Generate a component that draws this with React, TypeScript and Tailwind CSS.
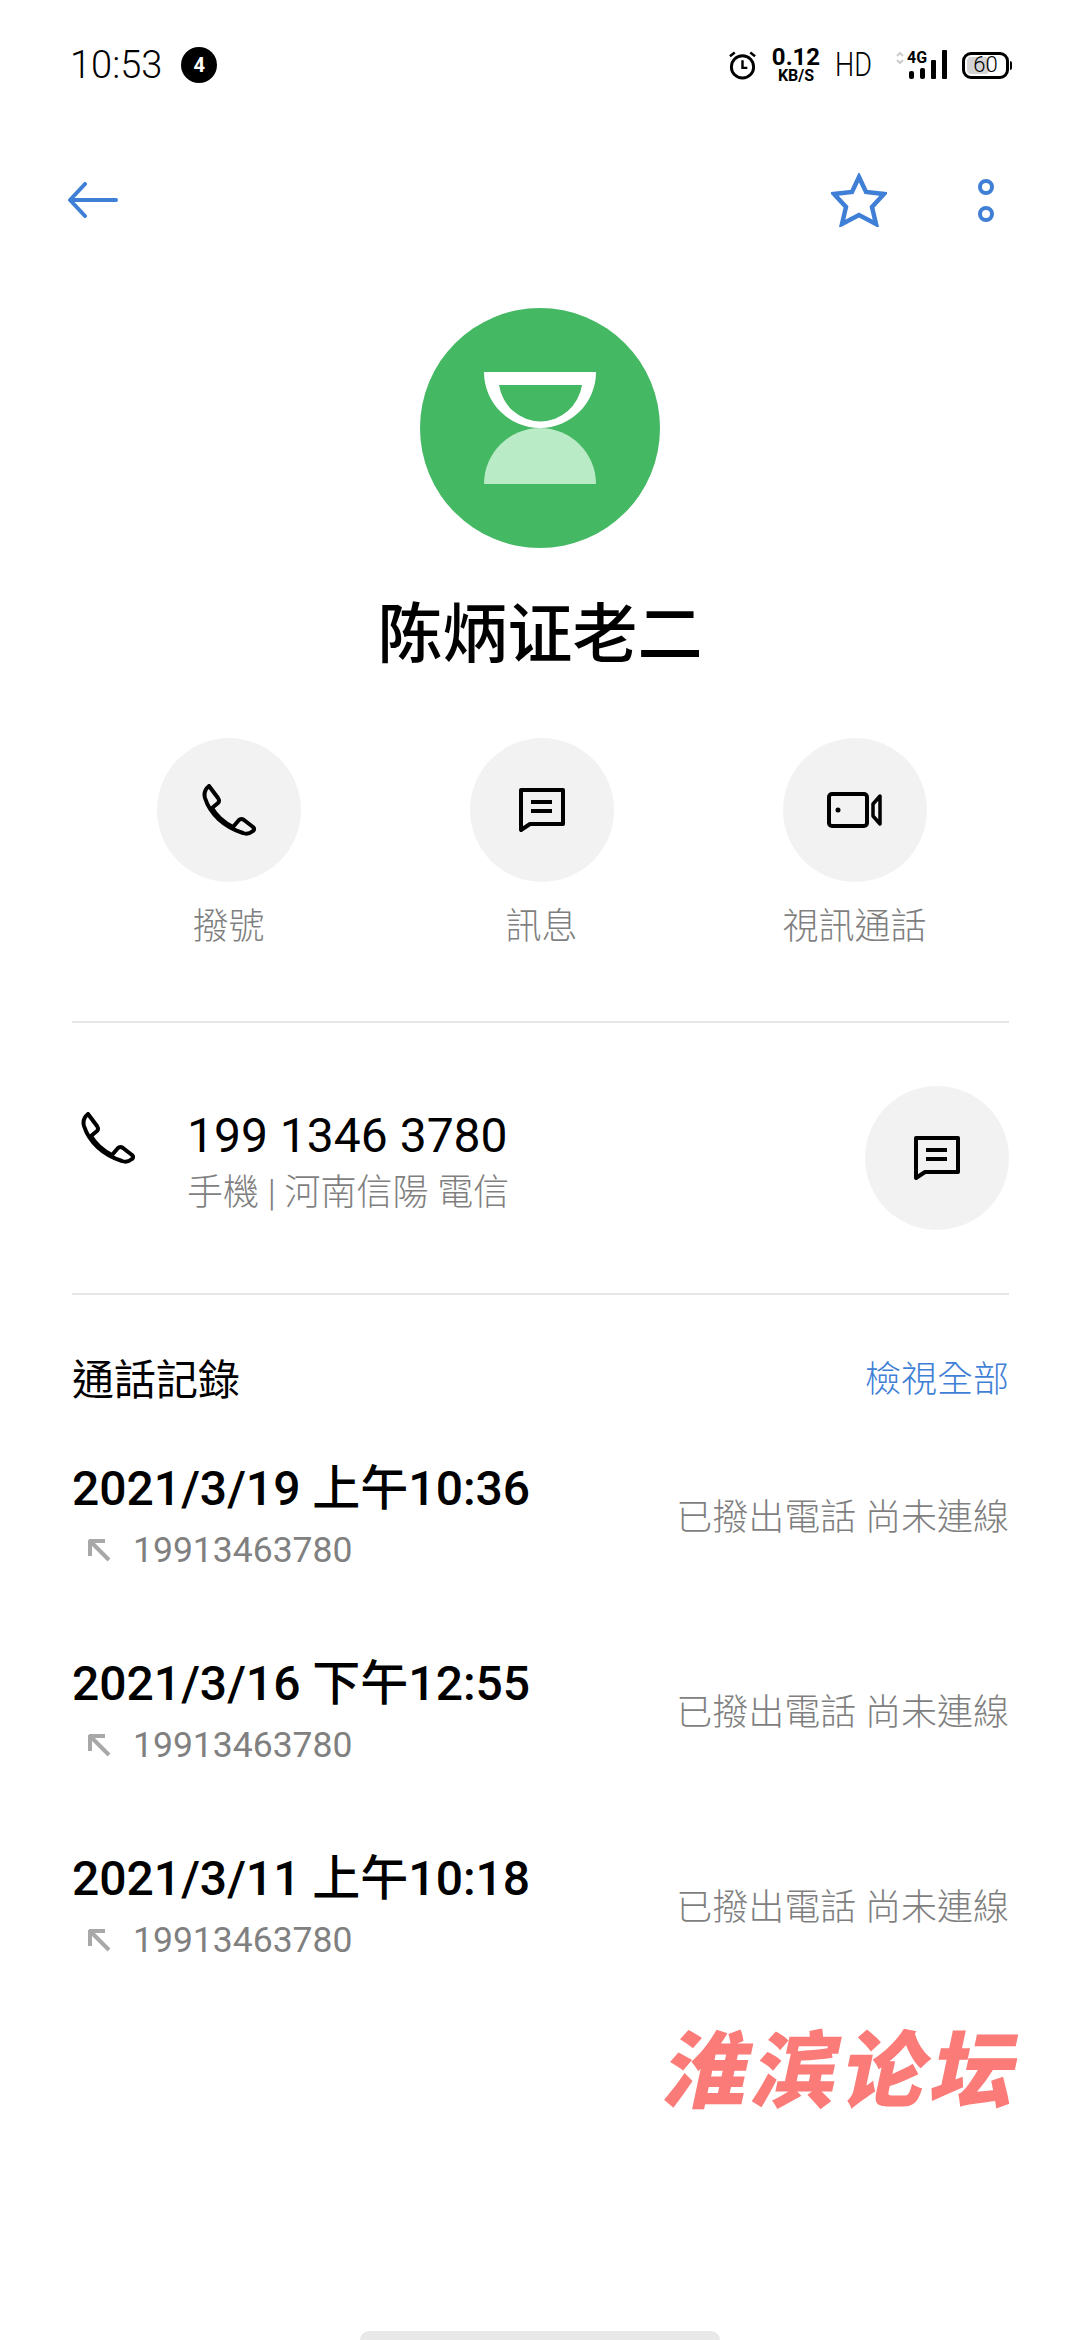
const CJK_TC = "font-['Roboto','Noto_Sans_CJK_TC',sans-serif]";

function PhoneIcon({ className }: { className: string }) {
  return (
    <svg viewBox="0 0 54 52" fill="none" stroke="currentColor" strokeWidth="4" strokeLinejoin="round" className={className}>
      <path d="M7 2 L16 14 Q18 17 16 19 L10 24 Q17 36 31 43 L37 36 Q39 34 42 36 L51 43 Q53 45 51 47 Q46 51 41 49 C22 43 8 30 3 14 Q1 7 7 2 Z" />
    </svg>
  );
}

function MessageIcon({ className }: { className: string }) {
  return (
    <svg viewBox="0 0 46 44" fill="none" stroke="currentColor" strokeWidth="4" className={className}>
      <path d="M2 2 H44 V36 H11 L2 42 Z" strokeLinejoin="round" />
      <path d="M12 14 H33 M12 23 H33" />
    </svg>
  );
}

function VideoIcon({ className }: { className: string }) {
  return (
    <svg viewBox="0 0 55 36" fill="none" stroke="currentColor" strokeWidth="4" className={className}>
      <rect x="2" y="2" width="38" height="32" rx="3" />
      <circle cx="11" cy="18" r="2.5" fill="currentColor" stroke="none" />
      <path d="M53 4 V32 L46 24 V12 Z" strokeWidth="3.5" strokeLinejoin="round" />
    </svg>
  );
}

function RoundButton({ children }: { children: React.ReactNode }) {
  return (
    <div className="flex size-[144px] items-center justify-center rounded-full bg-[#f2f2f2] text-black">
      {children}
    </div>
  );
}

function Action({ label, children }: { label: string; children: React.ReactNode }) {
  return (
    <div className="flex flex-col items-center">
      <RoundButton>{children}</RoundButton>
      <div className="mt-[23px] text-[36px] leading-[44px] font-light text-[#7f7f7f]">{label}</div>
    </div>
  );
}

function StatusIcons() {
  return (
    <div className="flex items-center text-black">
      <svg viewBox="0 0 30 30" fill="none" stroke="currentColor" strokeWidth="3" className="h-[30px] w-[29px]">
        <circle cx="15" cy="17" r="11.5" />
        <path d="M15 10 V18 H20" strokeWidth="2.5" />
        <path d="M2 6 L7 2 M28 6 L23 2" strokeWidth="2.5" />
      </svg>
      <div className="ml-[15px] flex w-[48px] flex-col items-center font-['Roboto',sans-serif] font-bold">
        <span className="text-[24px] leading-[21px]">0.12</span>
        <span className="text-[16px] leading-[15px]">KB/S</span>
      </div>
      <span className="ml-[15px] w-[46px] origin-left scale-x-[0.82] font-['Roboto',sans-serif] text-[33px] leading-[32px] font-light">HD</span>
      <div className="ml-[15px] flex h-[30px] w-[62px] items-start">
        <svg viewBox="0 0 8 14" fill="none" stroke="#cccccc" strokeWidth="2" className="mt-[1px] h-[14px] w-[8px]">
          <path d="M1 5 L4 2 L7 5 M1 9 L4 12 L7 9" />
        </svg>
        <span className="ml-[3px] font-['Roboto',sans-serif] text-[16px] leading-[15px] font-bold">4G</span>
      </div>
      <svg viewBox="0 0 40 30" fill="black" className="ml-[-49px] h-[30px] w-[40px]">
        <rect x="0" y="21" width="5" height="8" rx="2" />
        <rect x="11" y="18" width="5" height="11" rx="2" />
        <rect x="22" y="10" width="5" height="19" rx="1" />
        <rect x="33" y="0" width="5" height="29" rx="1" />
      </svg>
      <div className="relative ml-[13px] flex h-[27px] w-[47px] items-center justify-center overflow-hidden rounded-[9px] border-[3px] border-black">
        <div className="absolute inset-y-[2px] left-[2px] w-[22px] rounded-[4px] bg-[#d4d4d4]" />
        <span className="relative font-['Roboto',sans-serif] text-[22px] leading-none font-light">60</span>
      </div>
      <div className="ml-[1px] h-[9px] w-[2px] rounded-r-full bg-black" />
    </div>
  );
}

function CallRow({ date, note }: { date: string; note: string }) {
  return (
    <div className="flex h-[195px] items-center justify-between">
      <div>
        <div className="text-[48px] leading-[60px] font-medium text-black">{date}</div>
        <div className="mt-[9px] flex items-center">
          <svg viewBox="0 0 24 24" fill="none" stroke="#a8a8a8" strokeWidth="4" className="ml-[15px] size-[24px]">
            <path d="M22 22 L3 3 M2 3 H18 M3 2 V18" />
          </svg>
          <span className="ml-[22px] text-[35.5px] leading-[44px] text-[#808080]">19913463780</span>
        </div>
      </div>
      <div className="mt-[5px] text-[36px] leading-[44px] font-light text-[#7f7f7f]">{note}</div>
    </div>
  );
}

export default function App() {
  return (
    <div className={`relative flex h-[2340px] w-[1080px] flex-col overflow-hidden bg-white ${CJK_TC}`}>
      {/* status bar */}
      <div className="flex h-[130px] shrink-0 items-center justify-between pr-[68px] pl-[70px]">
        <div className="flex items-center">
          <span className="font-['Roboto',sans-serif] text-[38px] font-light text-black">10:53</span>
          <span className="ml-[19px] flex size-[36px] items-center justify-center rounded-full bg-black font-['Roboto',sans-serif] text-[20px] font-bold text-white">
            4
          </span>
        </div>
        <StatusIcons />
      </div>

      {/* toolbar */}
      <div className="flex h-[140px] shrink-0 items-center justify-between pr-[86px] pl-[68px] text-[#3f7fd6]">
        <svg viewBox="0 0 50 36" fill="none" stroke="currentColor" strokeWidth="4" strokeLinecap="round" strokeLinejoin="round" className="h-[36px] w-[50px]">
          <path d="M48 18 H3 M17 2 L2 18 L17 34" />
        </svg>
        <div className="flex items-center">
          <svg viewBox="0 0 56 54" fill="none" stroke="currentColor" strokeWidth="4.5" strokeLinejoin="miter" className="h-[54px] w-[56px]">
            <path d="M28 4 L35 19 L53 21 L41 34 L45 51 L28 42 L11 51 L15 34 L3 21 L21 19 Z" />
          </svg>
          <div className="ml-[91px] flex flex-col gap-[11px]">
            <div className="size-[16px] rounded-full border-[4px] border-current" />
            <div className="size-[16px] rounded-full border-[4px] border-current" />
          </div>
        </div>
      </div>

      {/* avatar + name */}
      <div className="mt-[38px] flex size-[240px] shrink-0 items-center justify-center self-center rounded-full bg-[#45b863]">
        <svg viewBox="0 0 112 112" className="size-[112px]">
          <path fillRule="evenodd" fill="#ffffff" d="M0 0 H112 A56 56 0 0 1 0 0 Z M15 13 A42 43 0 0 0 98 13 Z" />
          <path fill="#b9ebc6" d="M0 112 A56 56 0 0 1 112 112 Z" />
        </svg>
      </div>
      <div className="mt-[49px] text-center font-['Noto_Sans_CJK_SC',sans-serif] text-[65px] leading-[64px] font-medium text-black">
        陈炳证老二
      </div>

      {/* quick actions */}
      <div className="mt-[77px] ml-[72px] grid w-[939px] grid-cols-3">
        <Action label="撥號">
          <PhoneIcon className="h-[52px] w-[54px]" />
        </Action>
        <Action label="訊息">
          <MessageIcon className="h-[44px] w-[46px]" />
        </Action>
        <Action label="視訊通話">
          <VideoIcon className="h-[36px] w-[55px]" />
        </Action>
      </div>

      <div className="mt-[72px] mr-[71px] ml-[72px] h-[2px] shrink-0 bg-[#e6e6e6]" />

      {/* phone number */}
      <div className="flex h-[270px] shrink-0 items-center pr-[71px] pl-[81px]">
        <PhoneIcon className="mb-[41px] h-[52px] w-[54px]" />
        <div className="ml-[52px] flex-1 pt-[6px]">
          <div className="font-['Roboto',sans-serif] text-[48px] leading-[56px] font-normal text-black">199 1346 3780</div>
          <div className="mt-[7px] text-[36px] leading-[44px] font-light text-[#7f7f7f]">手機 | 河南信陽 電信</div>
        </div>
        <RoundButton>
          <MessageIcon className="h-[44px] w-[46px]" />
        </RoundButton>
      </div>

      <div className="mr-[71px] ml-[72px] h-[2px] shrink-0 bg-[#e6e6e6]" />

      {/* call history */}
      <div className="mt-[55px] flex h-[60px] shrink-0 items-center justify-between pr-[71px] pl-[72px]">
        <span className="text-[42px] text-black">通話記錄</span>
        <span className="text-[36px] font-light text-[#3f7fd6]">檢視全部</span>
      </div>
      <div className="mt-[8px] pr-[71px] pl-[72px]">
        <CallRow date="2021/3/19 上午10:36" note="已撥出電話 尚未連線" />
        <CallRow date="2021/3/16 下午12:55" note="已撥出電話 尚未連線" />
        <CallRow date="2021/3/11 上午10:18" note="已撥出電話 尚未連線" />
      </div>

      {/* forum watermark */}
      <div className="absolute top-[2015px] left-[668px] -skew-x-12 font-['Noto_Sans_CJK_SC',sans-serif] text-[84px] leading-[100px] font-black tracking-[5px] whitespace-nowrap text-[#fa7b78]">
        淮滨论坛
      </div>

      {/* home indicator */}
      <div className="mt-auto h-[9px] w-[360px] shrink-0 self-center rounded-t-full bg-[#e8e8e8]" />
    </div>
  );
}
